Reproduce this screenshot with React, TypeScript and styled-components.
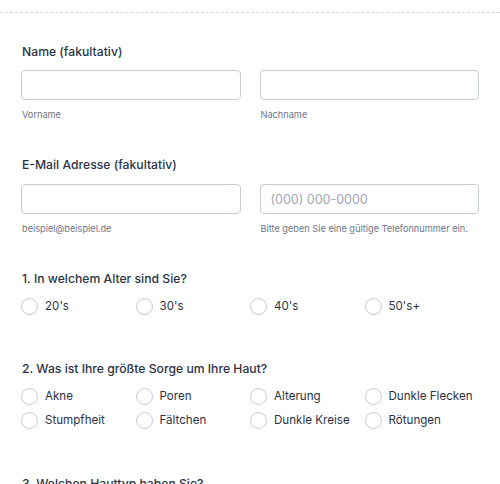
import React from "react";
import styled, { createGlobalStyle } from "styled-components";

const Global = createGlobalStyle`
  html, body { margin: 0; padding: 0; background: #ffffff; }
  body { font-family: Inter, "Noto Sans", sans-serif; color: #2c3345; }
  * { box-sizing: border-box; }
`;

const Page = styled.div`
  width: 500px;
  height: 484px;
  overflow: hidden;
  padding-top: 12px;
`;

const Divider = styled.div`
  border-top: 1px dashed #d3d6de;
`;

const Form = styled.div`
  padding: 0 21px;
`;

const Section = styled.div<{ $top: number }>`
  margin-top: ${(p) => p.$top}px;
`;

const Label = styled.div`
  font-size: 12.2px;
  line-height: 16px;
  font-weight: 500;
  color: #2c3345;
  padding-left: 1px;
  white-space: nowrap;
`;

const TwoCols = styled.div<{ $top: number }>`
  display: grid;
  grid-template-columns: 1fr 1fr;
  column-gap: 19px;
  margin-top: ${(p) => p.$top}px;
`;

const Field = styled.div`
  display: flex;
  flex-direction: column;
`;

const Input = styled.div`
  height: 30px;
  border: 1px solid #c7cbd5;
  border-radius: 4px;
  background: #fff;
  display: flex;
  align-items: center;
  padding: 0 10px;
  font-size: 12.5px;
  color: #a0a6b4;
`;

const Sub = styled.div`
  margin-top: 8px;
  font-size: 9.2px;
  line-height: 14px;
  color: #6f7687;
  padding-left: 1px;
  white-space: nowrap;
`;

const Options = styled.div`
  display: grid;
  grid-template-columns: repeat(4, 1fr);
  row-gap: 4px;
  margin-top: 9px;
`;

const Option = styled.label`
  display: flex;
  align-items: center;
  height: 20px;
  font-size: 11.6px;
  color: #2c3345;
  white-space: nowrap;
`;

const Circle = styled.span`
  width: 17px;
  height: 17px;
  border: 1px solid #c3c8d3;
  border-radius: 50%;
  background: #fff;
  margin-right: 7px;
  flex-shrink: 0;
`;

const q1 = ["20's", "30's", "40's", "50's+"];
const q2 = [
  "Akne",
  "Poren",
  "Alterung",
  "Dunkle Flecken",
  "Stumpfheit",
  "Fältchen",
  "Dunkle Kreise",
  "Rötungen",
];

export default function App() {
  return (
    <>
      <Global />
      <Page>
        <Divider />
        <Form>
          <Section $top={31}>
            <Label>Name (fakultativ)</Label>
            <TwoCols $top={10}>
              <Field>
                <Input />
                <Sub>Vorname</Sub>
              </Field>
              <Field>
                <Input />
                <Sub>Nachname</Sub>
              </Field>
            </TwoCols>
          </Section>
          <Section $top={35}>
            <Label>E-Mail Adresse (fakultativ)</Label>
            <TwoCols $top={11}>
              <Field>
                <Input />
                <Sub>beispiel@beispiel.de</Sub>
              </Field>
              <Field>
                <Input>(000) 000-0000</Input>
                <Sub>Bitte geben Sie eine gültige Telefonnummer ein.</Sub>
              </Field>
            </TwoCols>
          </Section>
          <Section $top={35}>
            <Label>1. In welchem Alter sind Sie?</Label>
            <Options>
              {q1.map((o) => (
                <Option key={o}>
                  <Circle />
                  {o}
                </Option>
              ))}
            </Options>
          </Section>
          <Section $top={45}>
            <Label>2. Was ist Ihre größte Sorge um Ihre Haut?</Label>
            <Options>
              {q2.map((o) => (
                <Option key={o}>
                  <Circle />
                  {o}
                </Option>
              ))}
            </Options>
          </Section>
          <Section $top={46}>
            <Label>3. Welchen Hauttyp haben Sie?</Label>
          </Section>
        </Form>
      </Page>
    </>
  );
}
